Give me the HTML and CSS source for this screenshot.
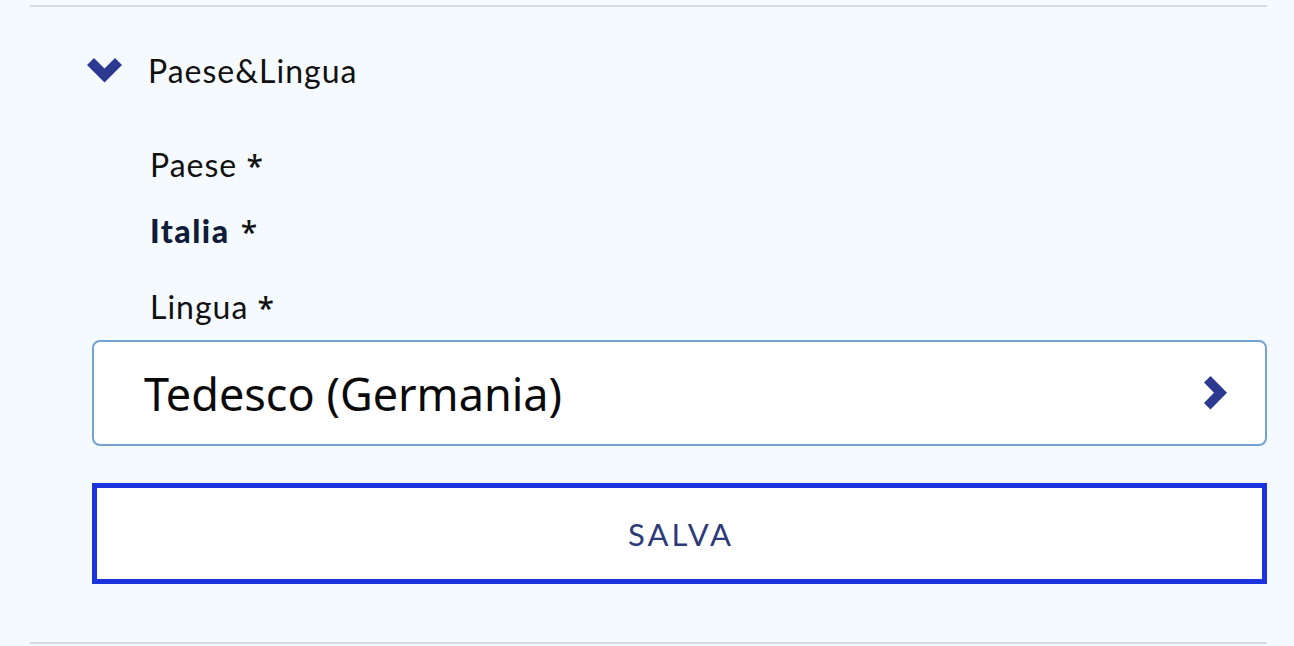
FILE: index.html
```html
<!DOCTYPE html>
<html lang="it">
<head>
<meta charset="utf-8">
<title>Paese&amp;Lingua</title>
<link rel="stylesheet" href="styles.css">
</head>
<body>
<div class="page">
  <section class="panel">
    <div class="panel-head">
      <svg class="chev-down" width="35" height="25" viewBox="0 0 35 25" aria-hidden="true">
        <path d="M0 7 L7 0 L17.5 10.5 L28 0 L35 7 L17.5 24.5 Z" fill="#2b3990"/>
      </svg>
      <span class="panel-title">Paese&amp;Lingua</span>
    </div>
    <div class="panel-body">
      <div class="label label-paese">Paese <span class="req">*</span></div>
      <div class="value">Italia <span class="req">*</span></div>
      <div class="label label-lingua">Lingua <span class="req">*</span></div>
      <div class="select">
        <span class="select-text">Tedesco (Germania)</span>
        <svg class="chev-right" width="23" height="34" viewBox="0 0 23 34" aria-hidden="true">
          <path d="M0 6.5 L6.5 0 L23 16.8 L6.5 33.6 L0 27.1 L10 16.8 Z" fill="#2b3990"/>
        </svg>
      </div>
      <button class="save" type="button">SALVA</button>
    </div>
  </section>
</div>
</body>
</html>
```
FILE: styles.css
```css
html, body {
  margin: 0;
  padding: 0;
  background: #f5faff;
}
.page {
  width: 1294px;
  height: 646px;
  padding: 5px 27px 0 30px;
  box-sizing: border-box;
  background: #f5faff;
}
.panel {
  border-top: 2px solid #d6dbe1;
  border-bottom: 2px solid #d6dbe1;
  height: 639px;
  box-sizing: border-box;
}
.panel-head {
  height: 126px;
  display: flex;
  align-items: center;
  padding-left: 57px;
  gap: 26px;
}
.chev-down {
  display: block;
  flex: none;
}
.panel-title {
  font-family: "Lato", "Noto Sans", sans-serif;
  font-size: 32px;
  letter-spacing: 1px;
  color: #111;
}
.panel-body {
  padding-left: 62px;
  display: flex;
  flex-direction: column;
}
.label, .value {
  font-family: "Lato", "Noto Sans", sans-serif;
  font-size: 32px;
  letter-spacing: 1px;
  line-height: 40px;
  height: 40px;
  color: #111;
  padding-left: 58px;
}
.req {
  font-family: "Noto Sans", sans-serif;
  font-weight: 500;
  font-size: 30px;
  line-height: 1;
  letter-spacing: 0;
  color: #111;
}
.label-paese {
  margin-top: 12px;
}
.value {
  margin-top: 26px;
  font-weight: 900;
  letter-spacing: 1.5px;
  color: #0f1c3a;
}
.value .req {
  font-weight: 500;
  margin-left: 2px;
}
.label-lingua {
  margin-top: 36px;
}
.select {
  margin-top: 13px;
  height: 106px;
  box-sizing: border-box;
  border: 2px solid #72a3d3;
  border-radius: 8px;
  background: #fff;
  display: flex;
  align-items: center;
  justify-content: space-between;
  padding: 0 38px 0 50px;
}
.select-text {
  font-family: "Noto Sans", "Open Sans", sans-serif;
  font-size: 45px;
  color: #0a0a0a;
}
.chev-right {
  display: block;
  flex: none;
}
.save {
  margin-top: 37px;
  height: 101px;
  box-sizing: border-box;
  border: 5px solid #1c34e0;
  border-radius: 0;
  background: #fff;
  font-family: "Lato", "Noto Sans", sans-serif;
  font-size: 31px;
  letter-spacing: 3px;
  color: #2d3a7a;
  padding: 0 0 0 3px;
}
```
